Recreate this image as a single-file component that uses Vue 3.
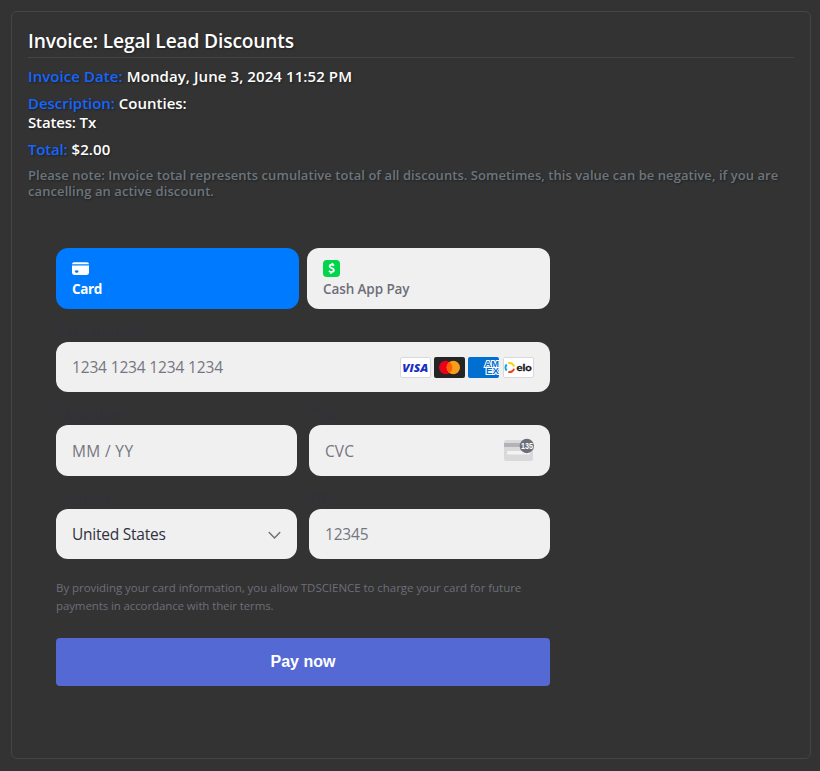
<script setup>
const rows = [
  { id: 'exp', label: 'Expiration' },
  { id: 'cvc', label: 'CVC' },
]
</script>

<template>
  <main class="invoice">
    <h1>Invoice: Legal Lead Discounts</h1>
    <p class="line date"><b>Invoice Date:</b> Monday, June 3, 2024 11:52 PM</p>
    <p class="line desc"><b>Description:</b> Counties:<br><span class="states">States: Tx</span></p>
    <p class="line total"><b>Total:</b> $2.00</p>
    <p class="note"><span class="n1">Please note: Invoice total represents cumulative total of all discounts. Sometimes, this value can be negative, if you are</span><br><span class="n2">cancelling an active discount.</span></p>

    <form class="payment" @submit.prevent>
      <div class="tabs">
        <button type="button" class="tab active">
          <svg width="17" height="17" viewBox="0 0 16 16"><path fill="#fff" fill-rule="evenodd" d="M0 4a2 2 0 0 1 2-2h12a2 2 0 0 1 2 2H0Zm0 1.2h16V12a2 2 0 0 1-2 2H2a2 2 0 0 1-2-2V5.200Z" /><ellipse cx="4.400" cy="10.800" rx="1.700" ry="1.200" fill="#007bff" /></svg>
          <span class="tab-card">Card</span>
        </button>
        <button type="button" class="tab">
          <svg width="17" height="17" viewBox="0 0 17 17"><rect width="17" height="17" rx="3.800" fill="#00d54b" /><path d="M11 5.700C9.600 4.100 6.600 4.300 6.600 6.300c0 2.300 4.300 1.400 4.300 3.800 0 2.200-3.300 2.300-5 .7M9.600 2.900l-.5 1.900M8.100 11.500l-.5 2.300" fill="none" stroke="#fff" stroke-width="1.800" /></svg>
          <span class="tab-cash">Cash App Pay</span>
        </button>
      </div>

      <label class="lab">Card number</label>
      <div class="field number">
        <span class="ph t-num">1234 1234 1234 1234</span>
        <span class="brands">
          <svg width="31" height="21" viewBox="0 0 31 21"><rect x=".5" y=".5" width="30" height="20" rx="1.500" fill="#fff" stroke="#d9d9dc" /><text x="2.300" y="14.500" textLength="26" lengthAdjust="spacingAndGlyphs" font-family="Open Sans, sans-serif" font-size="11" font-style="italic" font-weight="800" fill="#1a2ec4">VISA</text></svg>
          <svg width="31" height="21" viewBox="0 0 31 21"><rect width="31" height="21" rx="2" fill="#252525" /><circle cx="11.700" cy="10.500" r="6.700" fill="#eb001b" /><circle cx="19.300" cy="10.500" r="6.700" fill="#f79e1b" /><path d="M15.500 5a6.700 6.700 0 0 1 0 11 6.700 6.700 0 0 1 0-11Z" fill="#ff5f00" /></svg>
          <svg width="31" height="21" viewBox="0 0 31 21"><rect width="31" height="21" rx="2" fill="#016fd0" /><g font-family="Liberation Sans, sans-serif" font-size="8.500" font-weight="700" fill="#016fd0" stroke="#fff" stroke-width="1.900" paint-order="stroke"><text x="16.500" y="9.800" textLength="14.400" lengthAdjust="spacingAndGlyphs">AM</text><text x="18" y="17.300" textLength="12.900" lengthAdjust="spacingAndGlyphs">EX</text></g></svg>
          <svg class="elo" width="31" height="21" viewBox="0 0 31 21"><rect x=".5" y=".5" width="30" height="20" rx="1.500" fill="#fff" stroke="#d9d9dc" /><g fill="none" stroke-width="2"><path d="M5.300 6.300a4.400 4.400 0 0 1 5.800 3.200" stroke="#ffcb05" /><path d="M3.700 7.500a4.400 4.400 0 0 0 0 6" stroke="#00a4e0" /><path d="M11.100 11.700a4.400 4.400 0 0 1-5.800 3" stroke="#ef4123" /></g><text x="13.500" y="13.700" textLength="15.300" lengthAdjust="spacingAndGlyphs" font-family="Lato, sans-serif" font-size="9.600" font-weight="700" fill="#111" stroke="#111" stroke-width=".3">elo</text></svg>
        </span>
      </div>

      <div class="pair">
        <label v-for="r in rows" :key="r.id" class="lab">{{ r.label }}</label>
        <div class="field"><span class="ph t-exp">MM / YY</span></div>
        <div class="field">
          <span class="ph t-cvc">CVC</span>
          <svg class="cvc-icon" width="30" height="24" viewBox="0 0 30 24"><rect x="0" y="3" width="29" height="21" rx="2.500" fill="#d9d9db" /><path d="M0 6h29v4H0z" fill="#b3b3b7" /><rect x="3" y="14" width="23" height="3.500" rx="1" fill="#f3f3f4" /><circle cx="22.800" cy="9" r="7.200" fill="#6d6e78" /><text x="17" y="11.800" textLength="12" lengthAdjust="spacingAndGlyphs" font-family="Liberation Sans, sans-serif" font-size="8.200" font-weight="700" fill="#fff">135</text></svg>
        </div>
      </div>

      <div class="pair">
        <label class="lab">Country</label>
        <label class="lab">ZIP</label>
        <div class="field low">
          <span class="value t-us">United States</span>
          <svg class="chev" width="13" height="9" viewBox="0 0 13 9"><path d="M1.200 1.400 6.500 6.900l5.300-5.500" fill="none" stroke="#6d6e78" stroke-width="1.400" stroke-linecap="round" /></svg>
        </div>
        <div class="field low"><span class="ph t-zip">12345</span></div>
      </div>

      <p class="terms"><span class="m1">By providing your card information, you allow TDSCIENCE to charge your card for future</span><br><span class="m2">payments in accordance with their terms.</span></p>
      <button type="submit" class="pay">Pay now</button>
    </form>
  </main>
</template>

<style>
body { background: #333; }
</style>

<style scoped>
* { box-sizing: border-box; }
.invoice {
  width: 800px;
  height: 748px;
  margin: 11px 0 0 11px;
  padding: 16px;
  border: 1px solid #454545;
  border-radius: 6px;
  color: #fff;
  font-family: "Open Sans", "Noto Sans", sans-serif;
  font-weight: 600;
  white-space: nowrap;
}
h1 {
  margin: 0;
  height: 30px;
  border-bottom: 1px solid #454545;
  font-size: 19.2px;
  line-height: 26px;
  font-weight: 600;
  letter-spacing: -0.16px;
  text-shadow: 1px 1px 2px #222;
}
.line { margin: 0 0 8px; font-size: 15px; line-height: 19px; text-shadow: 1px 1px 2px #222; }
.line b { color: #1565ff; font-weight: 600; }
.date { margin-top: 9px; letter-spacing: 0.09px; }
.date b { letter-spacing: 0.07px; }
.desc { letter-spacing: 0; }
.desc b { letter-spacing: -0.03px; }
.states { letter-spacing: -0.15px; }
.total { letter-spacing: 0.15px; }
.total b { letter-spacing: -0.2px; }
.note { margin: 0; font-size: 13px; line-height: 16px; color: #6c757d; text-shadow: 1px 1px 2px #222; }
.n1 { letter-spacing: 0.052px; }
.n2 { letter-spacing: 0.09px; }
.payment {
  width: 574px;
  height: 518px;
  margin: 9px 0 0 -12px;
  padding: 39px;
  border: 1px solid #323337;
  border-radius: 7px;
  font-weight: 400;
}
.tabs { display: grid; grid-template-columns: 243px 243px; gap: 8px; }
.tab {
  display: flex;
  flex-direction: column;
  align-items: flex-start;
  height: 61px;
  padding: 12px 16px 10px;
  border: 0;
  border-radius: 12px;
  background: #f0f0f0;
  color: #6d6e78;
  font: 600 13.500px/18px "Open Sans", sans-serif;
  letter-spacing: -0.1px;
}
.tab svg { margin-bottom: 3px; flex: none; }
.tab.active { background: #007bff; color: #fff; }
.tab-card { letter-spacing: -0.4px; font-weight: 700; }
.lab { height: 33px; padding-top: 13px; color: #30313d; font-size: 14.500px; line-height: 17px; display: block; }
.field {
  display: flex;
  align-items: center;
  justify-content: space-between;
  height: 50px;
  padding: 0 16px;
  border-radius: 12px;
  background: #f0f0f0;
  font-size: 15.500px;
}
.number { width: 494px; }
.pair .field { height: 51px; }
.pair .field.low { height: 50px; }
.ph { color: #757680; }
.value { color: #30313d; }
.t-num { letter-spacing: -0.16px; }
.t-exp { letter-spacing: 0.35px; }
.t-cvc { letter-spacing: 0.1px; }
.t-us { letter-spacing: -0.24px; }
.t-zip { letter-spacing: -0.2px; }
.pair { display: grid; grid-template-columns: 241px 241px; column-gap: 12px; }
.brands { display: flex; gap: 3px; }
.elo { margin-left: 1px; }
.cvc-icon { margin-bottom: 4px; }
.chev { margin-top: 2px; }
.terms { margin: 20px 0 23px; color: #6d6e78; font-size: 11.5px; line-height: 18px; }
.m1 { letter-spacing: -0.045px; }
.m2 { letter-spacing: -0.11px; }
.pay {
  display: block;
  width: 494px;
  height: 48px;
  border: 0;
  border-radius: 4px;
  background: #5469d4;
  color: #fff;
  font: 700 16px "Liberation Sans", sans-serif;
}
</style>
